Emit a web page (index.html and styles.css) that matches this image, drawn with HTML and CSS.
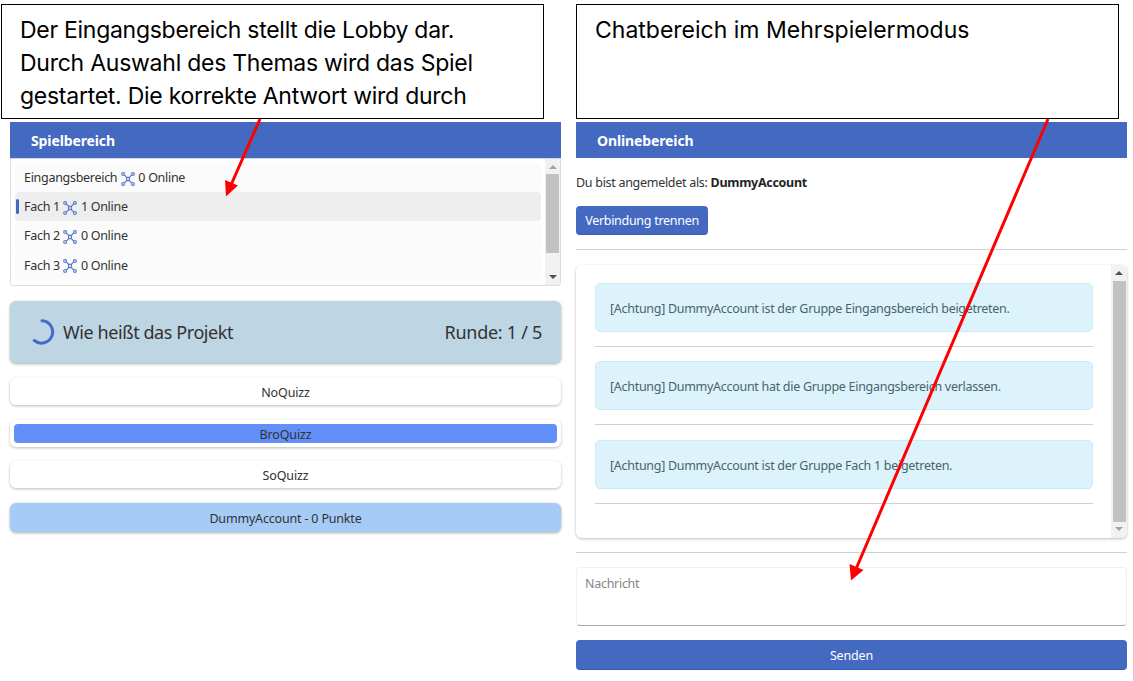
FILE: index.html
```html
<!DOCTYPE html>
<html lang="de">
<head>
<meta charset="utf-8">
<title>Quizz</title>
<link rel="stylesheet" href="styles.css">
</head>
<body>
<svg width="0" height="0" class="defs">
  <symbol id="net" viewBox="0 0 14 14">
    <g fill="none" stroke="#5b7cca" stroke-width="1.2">
      <path d="M3.2 2.700 5.600 5.400H8.400L10.800 2.700M3.200 11.300 5.600 8.600H8.400L10.800 11.300"/>
      <circle cx="2.1" cy="2.1" r="1.4"/><circle cx="11.9" cy="2.1" r="1.4"/>
      <circle cx="2.1" cy="11.900" r="1.4"/><circle cx="11.9" cy="11.900" r="1.4"/>
      <circle cx="7" cy="7" r="1.6"/>
    </g>
  </symbol>
</svg>
<main class="page">
  <section class="column">
    <div class="note"><p class="l1">Der Eingangsbereich stellt die Lobby dar.</p><p class="l2">Durch Auswahl des Themas wird das Spiel</p><p class="l3">gestartet. Die korrekte Antwort wird durch</p></div>
    <h2 class="title">Spielbereich</h2>
    <div class="rooms">
      <ul class="room-list">
        <li class="room">Eingangsbereich <svg class="net"><use href="#net"/></svg> 0 Online</li>
        <li class="room active">Fach 1 <svg class="net"><use href="#net"/></svg> 1 Online</li>
        <li class="room">Fach 2 <svg class="net"><use href="#net"/></svg> 0 Online</li>
        <li class="room">Fach 3 <svg class="net"><use href="#net"/></svg> 0 Online</li>
      </ul>
      <div class="scrollbar"><i class="up dim"></i><b class="thumb short"></b><i class="down"></i></div>
    </div>
    <div class="question">
      <svg class="spinner" viewBox="0 0 26 26"><path d="M13 1.700A11.200 11.200 0 1 1 5.300 21.500" fill="none" stroke="#4469c8" stroke-width="3" stroke-linecap="round"/></svg>
      <span class="ask">Wie heißt das Projekt</span><span class="round">Runde: 1 / 5</span>
    </div>
    <div class="option"><span>NoQuizz</span></div>
    <div class="option chosen"><span>BroQuizz</span></div>
    <div class="option last"><span>SoQuizz</span></div>
    <div class="player">DummyAccount - 0 Punkte</div>
  </section>
  <section class="column">
    <div class="note"><p class="r1">Chatbereich im Mehrspielermodus</p></div>
    <h2 class="title">Onlinebereich</h2>
    <p class="login">Du bist angemeldet als: <strong>DummyAccount</strong></p>
    <button class="button leave">Verbindung trennen</button>
    <hr>
    <div class="chat">
      <div class="messages">
        <p class="alert">[Achtung] DummyAccount ist der Gruppe Eingangsbereich beigetreten.</p><hr>
        <p class="alert">[Achtung] DummyAccount hat die Gruppe Eingangsbereich verlassen.</p><hr>
        <p class="alert">[Achtung] DummyAccount ist der Gruppe Fach 1 beigetreten.</p><hr>
      </div>
      <div class="scrollbar"><i class="up"></i><b class="thumb"></b><i class="down dim"></i></div>
    </div>
    <hr>
    <div class="message-box">Nachricht</div>
    <button class="button send">Senden</button>
  </section>
</main>
<svg class="arrows" viewBox="0 0 1133 681">
  <g stroke="#f00" stroke-width="3"><path d="M260 119 231 185M1048 119 856 569"/></g>
  <g fill="#f00"><path d="M226 196.500 225 180 238 185.500ZM851 580.500 849.500 564 863.500 570Z"/></g>
</svg>
</body>
</html>
```
FILE: styles.css
```css
* { box-sizing: border-box; }
body { margin: 0; background: #fff; color: #323232; font: 12.5px/20px "Noto Sans", "Open Sans", sans-serif; letter-spacing: -0.29px; overflow: hidden; }
p, h2, ul { margin: 0; padding: 0; }
.defs { position: absolute; }
.page { display: grid; grid-template-columns: 551px 551px; column-gap: 15px; padding: 4px 0 0 10px; }
.column { display: flex; flex-direction: column; min-width: 0; }
.note { height: 115px; width: 543px; margin-bottom: 3px; border: 1px solid #000; padding: 9px 18px; font: 23px/33px Inter, sans-serif; letter-spacing: 0; color: #000; white-space: nowrap; }
.l1 { letter-spacing: -0.28px; }
.l2 { letter-spacing: -0.25px; }
.l3 { letter-spacing: -0.26px; }
.column:first-child .note { margin-left: -9px; }
.title { height: 36px; padding-left: 21px; background: #4469c1; color: #fff; font-size: 14px; line-height: 38px; font-weight: 700; letter-spacing: -0.12px; }
.rooms { display: flex; height: 128px; border: 1px solid #dedede; border-top-color: #ccd6ec; border-radius: 0 0 4px 4px; overflow: hidden; }
.room-list { flex: 1; padding: 4px 3px 0 4px; list-style: none; margin-right: 1px; background: #fff; }
.room { display: flex; align-items: center; gap: 3.5px; height: 29.2px; padding: 1px 0 0 9px; background: #fbfbfb; border-radius: 4px; position: relative; }
.room.active { background: #eee; }
.room.active::before { content: ""; position: absolute; left: 1px; top: 7px; width: 3px; height: 15px; border-radius: 2px; background: #4469c1; }
.net { width: 14px; height: 14px; margin-top: 1px; }
.scrollbar { width: 15px; background: #f1f1f1; display: flex; flex-direction: column; align-items: center; justify-content: space-between; padding: 6px 0 6px; }
.scrollbar i { width: 0; height: 0; border: 4px solid transparent; }
.scrollbar .up { border-top: 0; border-bottom-color: #505050; }
.scrollbar .down { border-bottom: 0; border-top-color: #505050; }
.scrollbar .up.dim { border-bottom-color: #a3a3a3; }
.scrollbar .down.dim { border-top-color: #a3a3a3; }
.chat .scrollbar { width: 16px; padding: 6px 0 7px; }
.thumb { width: 13px; flex: 1; margin: 6px 0 5px; background: #c1c1c1; }
.thumb.short { flex: none; height: 79px; margin: 5px 0 auto; }
.question { margin-top: 15px; height: 62px; display: flex; align-items: center; padding: 0 19px; background: #bed6e4; border-radius: 6px; box-shadow: 0 1px 3px #aaa; font-size: 18px; letter-spacing: -0.28px; }
.spinner { width: 26px; height: 26px; margin-right: 8px; }
.ask { letter-spacing: -0.42px; }
.round { margin-left: auto; }
.option { height: 27px; margin-top: 15px; padding: 4px; border-radius: 6px; box-shadow: 0 1px 3px #bbb; text-align: center; line-height: 21px; letter-spacing: -0.15px; }
.option.last { margin-top: 14px; }
.option:not(.chosen) { line-height: 22px; }
.option span { display: block; border-radius: 4px; height: 19px; }
.chosen span { background: #628ff8; }
.player { height: 29px; margin-top: 15px; background: #a6cbf7; border-radius: 6px; box-shadow: 0 1px 3px #aaa; text-align: center; line-height: 32px; letter-spacing: -0.18px; }
.login { margin-top: 15px; }
.login strong { color: #242424; }
.button { border: 0; border-bottom: 1px solid #345bb5; border-radius: 4px; background: #4469c1; color: #fff; font: inherit; letter-spacing: inherit; padding: 2px 0 0; }
.leave { width: 132px; height: 29px; margin-top: 13px; }
hr { width: 100%; border: 0; border-top: 1px solid #d1d1d1; margin: 14px 0 15px; }
.chat { display: flex; height: 273px; border-radius: 6px; box-shadow: 0 1px 3px #bbb; overflow: hidden; }
.messages { flex: 1; padding: 18px 18px 0 19px; }
.alert { height: 49px; padding-left: 14px; border: 1px solid #c6edf8; border-radius: 5px; background: #dcf3fb; color: #49636c; line-height: 49px; white-space: nowrap; }
.messages hr { margin: 14px 0 14.4px; }
.message-box { height: 59px; margin-top: -1px; border: 1px solid #f0f0f0; border-bottom-color: #aaa; border-radius: 4px; padding: 6px 8px; color: #858585; }
.send { width: 100%; height: 30px; margin-top: 14px; letter-spacing: -0.15px; }
.arrows { position: absolute; left: 0; top: 0; width: 1133px; height: 681px; pointer-events: none; }
```
